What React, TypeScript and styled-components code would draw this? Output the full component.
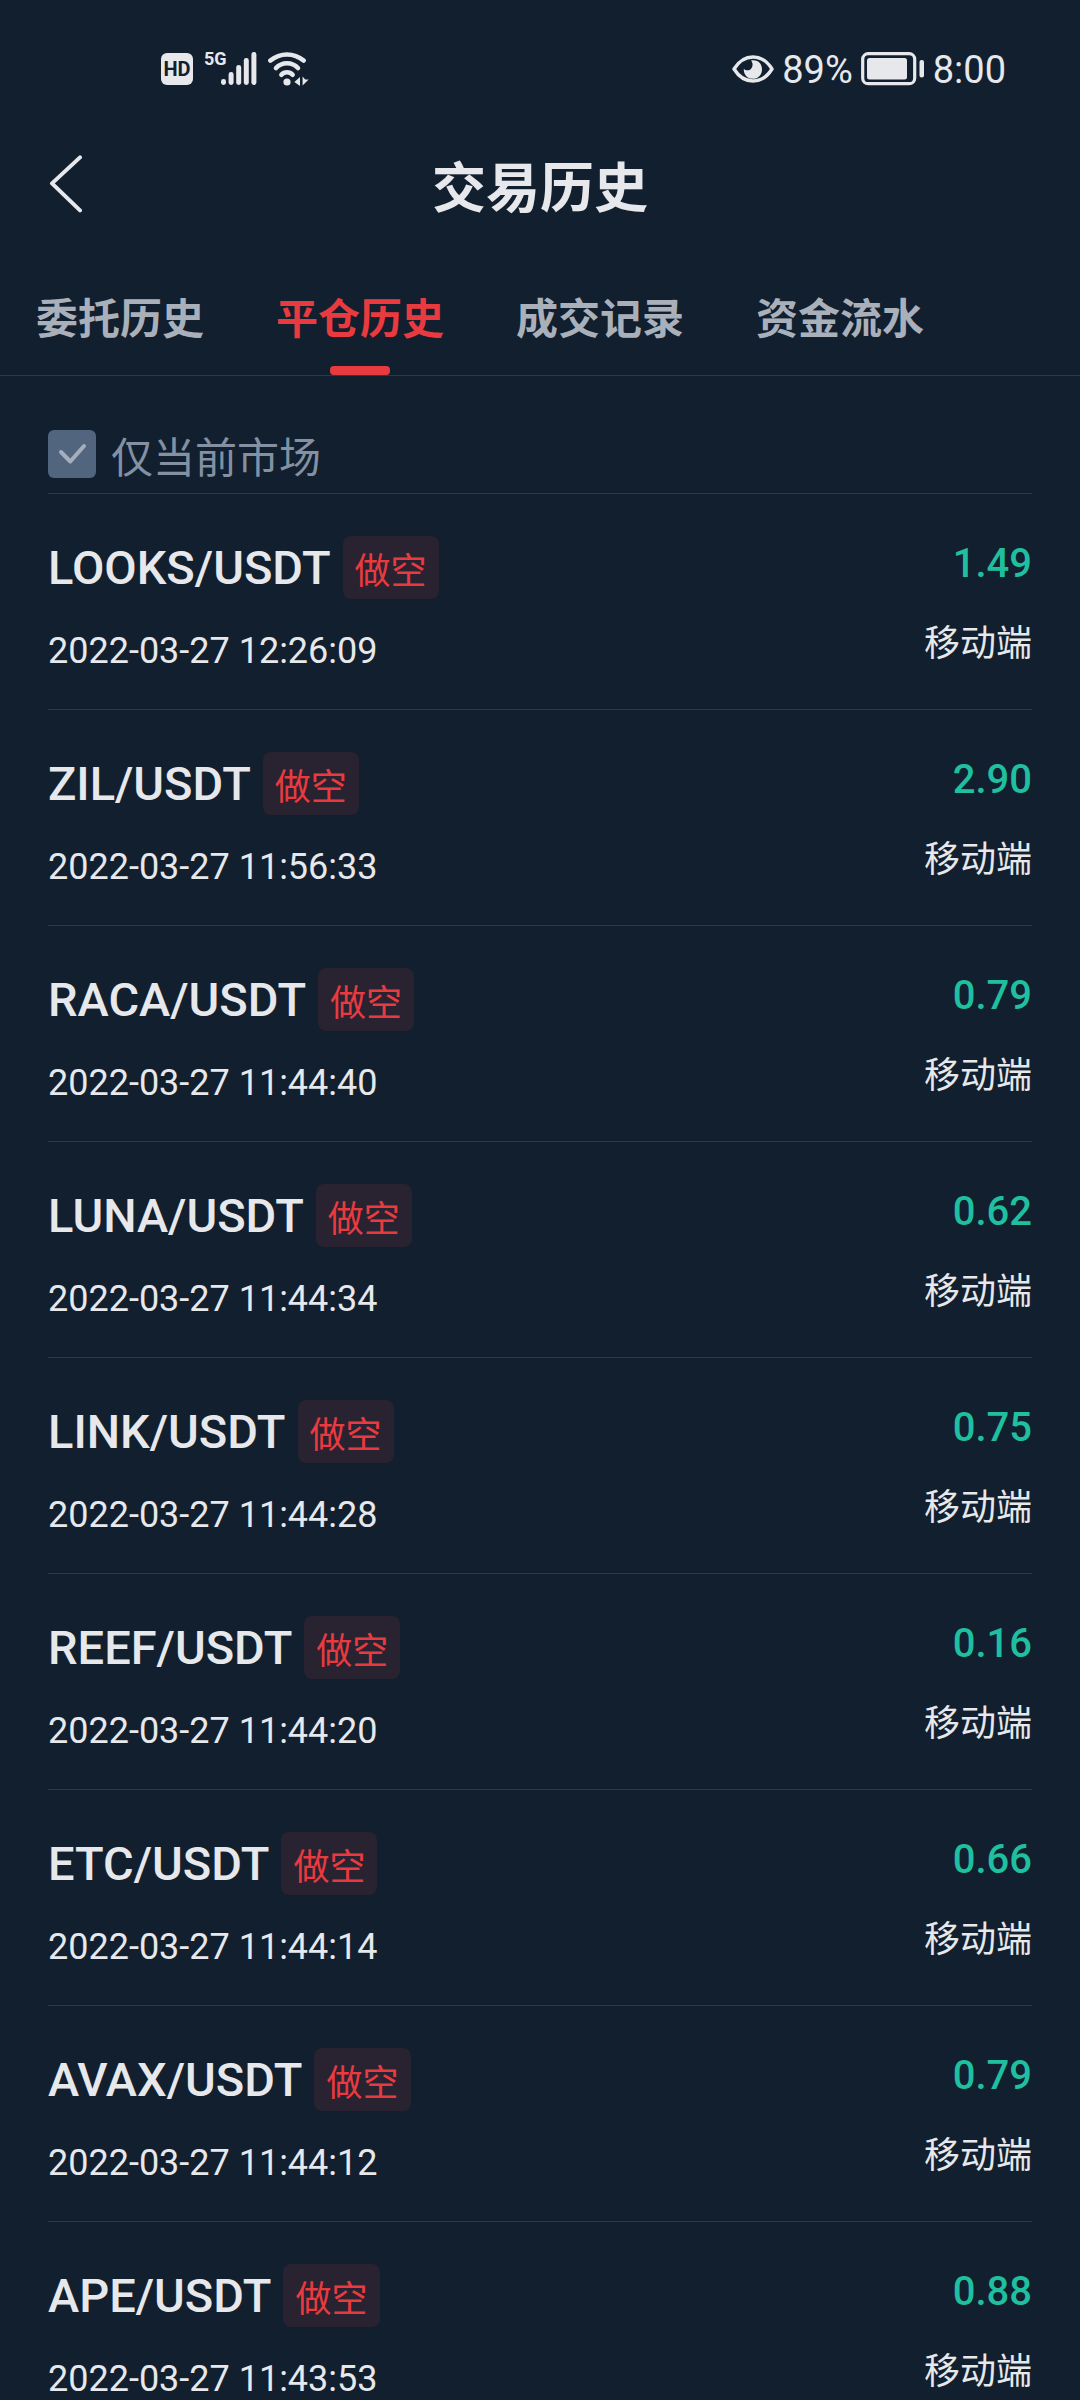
import React, { useState } from "react";
import styled, { createGlobalStyle, ThemeProvider } from "styled-components";

const latin = `Roboto, "Noto Sans CJK SC", sans-serif`;
const han = `"Noto Sans CJK SC", Roboto, sans-serif`;

const theme = {
  bg: "#121f2f",
  text: "#e6e8eb",
  muted: "#a9b0ba",
  label: "#8491a2",
  line: "#2b394c",
  red: "#e93b3f",
  redSoft: "#282231",
  green: "#1fbf9f",
  box: "#52657f",
  tick: "#a5afbc",
  gutter: "48px",
};

const GlobalStyle = createGlobalStyle`
  *, *::before, *::after { box-sizing: border-box; }
  html, body { margin: 0; background: ${theme.bg}; }
  button { appearance: none; border: 0; padding: 0; margin: 0; background: none; color: inherit; font: inherit; cursor: pointer; }
`;

const Screen = styled.div`
  display: flex;
  flex-direction: column;
  height: 100vh;
  background: ${(p) => p.theme.bg};
  color: ${(p) => p.theme.text};
  font-family: ${latin};
`;

const StatusBar = styled.div`
  display: flex;
  flex: none;
  justify-content: space-between;
  align-items: center;
  height: 137px;
  padding: 0 74px 0 161px;
`;

const StatusGroup = styled.div<{ $gap: number }>`
  display: flex;
  align-items: center;
  gap: ${(p) => p.$gap}px;
`;

const StatusText = styled.span`
  padding-top: 3px;
  font-size: 38px;
  line-height: 42px;
`;

const HdBadge = styled.span`
  width: 32px;
  height: 32px;
  border-radius: 6px;
  background: ${(p) => p.theme.text};
  color: ${(p) => p.theme.bg};
  font-size: 20px;
  font-weight: 700;
  line-height: 33px;
  text-align: center;
`;

const Signal = styled.span`
  display: flex;
  align-items: flex-start;

  & > svg {
    margin-left: -6px;
  }
`;

const Generation = styled.span`
  font-size: 18px;
  font-weight: 700;
  line-height: 14px;
`;

const Header = styled.header`
  display: grid;
  flex: none;
  grid-template-columns: 1fr auto 1fr;
  align-items: center;
  height: 96px;
  padding: 0 ${(p) => p.theme.gutter};
`;

const BackButton = styled.button`
  display: flex;
  width: 36px;
`;

const Title = styled.h1`
  margin: 0;
  font-family: ${han};
  font-size: 54px;
  font-weight: 700;
  line-height: 72px;
`;

const Tabs = styled.div`
  display: flex;
  flex: none;
  height: 143px;
  border-bottom: 1px solid ${(p) => p.theme.line};
`;

const Tab = styled.button<{ $active: boolean }>`
  position: relative;
  padding: 24px 36px 0;
  color: ${(p) => (p.$active ? p.theme.red : p.theme.muted)};
  font-family: ${han};
  font-size: 42px;
  font-weight: 700;
  line-height: 60px;

  &::after {
    content: "";
    display: ${(p) => (p.$active ? "block" : "none")};
    position: absolute;
    bottom: 0;
    left: 50%;
    width: 60px;
    height: 9px;
    margin-left: -30px;
    border-radius: 4px;
    background: ${(p) => p.theme.red};
  }
`;

const Content = styled.main`
  flex: 1;
  min-height: 0;
  padding: 0 ${(p) => p.theme.gutter};
  overflow-y: auto;
  scrollbar-width: none;
`;

const FilterBar = styled.div`
  display: flex;
  align-items: flex-end;
  height: 118px;
  padding-bottom: 8px;
  border-bottom: 1px solid ${(p) => p.theme.line};
`;

const FilterLabel = styled.label`
  display: flex;
  align-items: center;
  gap: 15px;
  color: ${(p) => p.theme.label};
  font-family: ${han};
  font-size: 42px;
  line-height: 60px;
  cursor: pointer;
`;

const CheckWrap = styled.span`
  display: grid;
  width: 48px;
  height: 48px;
  margin-bottom: 2px;

  & > * {
    grid-area: 1 / 1;
  }

  & > svg {
    pointer-events: none;
  }
`;

const CheckInput = styled.input`
  appearance: none;
  width: 48px;
  height: 48px;
  margin: 0;
  border-radius: 6px;
  background: ${(p) => p.theme.box};
  cursor: pointer;
`;

const List = styled.ul`
  margin: 0;
  padding: 0;
  list-style: none;
`;

const Row = styled.li`
  display: flex;
  justify-content: space-between;
  padding: 42px 0 37px;
  border-bottom: 1px solid ${(p) => p.theme.line};
`;

const Info = styled.div`
  display: flex;
  flex-direction: column;
  gap: 31px;
`;

const Result = styled(Info)`
  align-items: flex-end;
  padding-top: 4px;
`;

const PairLine = styled.div`
  display: flex;
  align-items: center;
  gap: 12px;
`;

const Pair = styled.span`
  font-size: 47px;
  font-weight: 500;
  line-height: 63px;
`;

const Tag = styled.span`
  padding: 2px 12px 0;
  border-radius: 8px;
  background: ${(p) => p.theme.redSoft};
  color: ${(p) => p.theme.red};
  font-family: ${han};
  font-size: 36px;
  line-height: 61px;
`;

const Time = styled.time`
  font-size: 36px;
  line-height: 42px;
`;

const Profit = styled.span`
  color: ${(p) => p.theme.green};
  font-size: 40px;
  font-weight: 500;
  line-height: 48px;
`;

const Source = styled.span`
  font-family: ${han};
  font-size: 36px;
  line-height: 42px;
`;

const SignalBars = () => (
  <svg width="36" height="34" viewBox="0 0 36 34" aria-hidden="true">
    {[27, 20, 13, 6, 0].map((top, i) => (
      <rect key={top} x={i * 7.6} y={top} width="5" height={33 - top} rx="2.4" fill={theme.text} />
    ))}
  </svg>
);

const WifiIcon = () => (
  <svg width="42" height="34" viewBox="0 0 42 34" fill="none" aria-hidden="true">
    <g stroke={theme.text} strokeWidth="4.6" strokeLinecap="round">
      <path d="M2.4 8.6C12 .4 26 .4 35.6 8.6" />
      <path d="M8 16C14 9.6 24 9.6 30 16" />
      <path d="M13.4 22.8C16.4 19.4 21.6 19.4 24.6 22.8" />
    </g>
    <circle cx="19" cy="30" r="3.6" fill={theme.text} />
    <path d="M32 25v9l-5.6-4zM34.6 24.6v9l6-6h-3.4z" fill={theme.text} />
  </svg>
);

const EyeIcon = () => (
  <svg width="42" height="28" viewBox="0 0 42 28" fill="none" aria-hidden="true">
    <path
      d="M2 14C7 6 13 2 21 2s14 4 19 12c-5 8-11 12-19 12S7 22 2 14z"
      stroke={theme.text}
      strokeWidth="3.4"
      strokeLinejoin="round"
    />
    <path d="M19 5.6c7-1.4 11 3.4 11 8.8 0 5.6-4.2 9.4-9.2 9.4-5.4 0-9.4-4-9-10 1.6 1.8 4.6 2.2 6.8.4 2.6-2.2 2.6-6 .4-8.6z" fill={theme.text} />
  </svg>
);

const BatteryIcon = () => (
  <svg width="64" height="34" viewBox="0 0 64 34" fill="none" aria-hidden="true">
    <rect x="1.7" y="1.7" width="52" height="30" rx="5.5" stroke={theme.text} strokeWidth="3.2" />
    <rect x="6" y="6" width="40" height="21.5" rx="2.5" fill={theme.text} />
    <rect x="58.5" y="8" width="4.5" height="17.5" rx="2" fill={theme.text} />
  </svg>
);

const BackIcon = () => (
  <svg width="36" height="60" viewBox="0 0 36 60" fill="none" aria-hidden="true">
    <path d="M32 2.4L4 28.4L32 55.4" stroke={theme.text} strokeWidth="4" strokeLinecap="round" strokeLinejoin="round" />
  </svg>
);

const TickIcon = () => (
  <svg width="48" height="48" viewBox="0 0 48 48" fill="none" aria-hidden="true">
    <path d="M13 22L22.3 31.5L36 16" stroke={theme.tick} strokeWidth="4" strokeLinecap="round" strokeLinejoin="round" />
  </svg>
);

const tabs = ["委托历史", "平仓历史", "成交记录", "资金流水"];

const trades = [
  { pair: "LOOKS/USDT", time: "2022-03-27 12:26:09", profit: "1.49" },
  { pair: "ZIL/USDT", time: "2022-03-27 11:56:33", profit: "2.90" },
  { pair: "RACA/USDT", time: "2022-03-27 11:44:40", profit: "0.79" },
  { pair: "LUNA/USDT", time: "2022-03-27 11:44:34", profit: "0.62" },
  { pair: "LINK/USDT", time: "2022-03-27 11:44:28", profit: "0.75" },
  { pair: "REEF/USDT", time: "2022-03-27 11:44:20", profit: "0.16" },
  { pair: "ETC/USDT", time: "2022-03-27 11:44:14", profit: "0.66" },
  { pair: "AVAX/USDT", time: "2022-03-27 11:44:12", profit: "0.79" },
  { pair: "APE/USDT", time: "2022-03-27 11:43:53", profit: "0.88" },
];

export default function App() {
  const [active, setActive] = useState(1);
  const [onlyCurrent, setOnlyCurrent] = useState(true);

  return (
    <ThemeProvider theme={theme}>
      <GlobalStyle />
      <Screen>
        <StatusBar>
          <StatusGroup $gap={11}>
            <HdBadge>HD</HdBadge>
            <Signal>
              <Generation>5G</Generation>
              <SignalBars />
            </Signal>
            <WifiIcon />
          </StatusGroup>
          <StatusGroup $gap={8}>
            <EyeIcon />
            <StatusText>89%</StatusText>
            <BatteryIcon />
            <StatusText>8:00</StatusText>
          </StatusGroup>
        </StatusBar>

        <Header>
          <BackButton type="button" aria-label="返回">
            <BackIcon />
          </BackButton>
          <Title>交易历史</Title>
        </Header>

        <Tabs role="tablist">
          {tabs.map((name, i) => (
            <Tab key={name} type="button" role="tab" aria-selected={i === active} $active={i === active} onClick={() => setActive(i)}>
              {name}
            </Tab>
          ))}
        </Tabs>

        <Content>
          <FilterBar>
            <FilterLabel htmlFor="only-current">
              <CheckWrap>
                <CheckInput
                  id="only-current"
                  type="checkbox"
                  checked={onlyCurrent}
                  onChange={(e) => setOnlyCurrent(e.target.checked)}
                />
                {onlyCurrent && <TickIcon />}
              </CheckWrap>
              仅当前市场
            </FilterLabel>
          </FilterBar>

          <List>
            {trades.map((trade) => (
              <Row key={trade.pair}>
                <Info>
                  <PairLine>
                    <Pair>{trade.pair}</Pair>
                    <Tag>做空</Tag>
                  </PairLine>
                  <Time>{trade.time}</Time>
                </Info>
                <Result>
                  <Profit>{trade.profit}</Profit>
                  <Source>移动端</Source>
                </Result>
              </Row>
            ))}
          </List>
        </Content>
      </Screen>
    </ThemeProvider>
  );
}
